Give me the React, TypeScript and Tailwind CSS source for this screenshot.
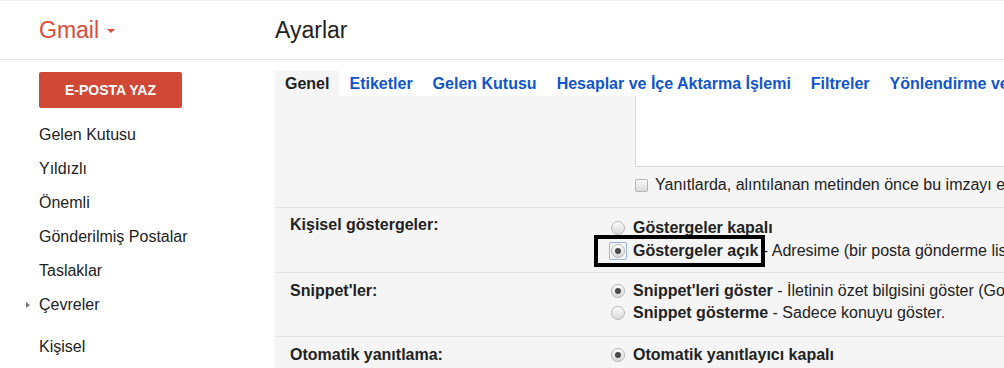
import React from "react";

const SideItems = ["Gelen Kutusu", "Yıldızlı", "Önemli", "Gönderilmiş Postalar", "Taslaklar"];

const Tabs = [
  "Genel",
  "Etiketler",
  "Gelen Kutusu",
  "Hesaplar ve İçe Aktarma İşlemi",
  "Filtreler",
  "Yönlendirme ve POP/IMAP",
];

const Radio = ({ checked = false, focus = false }: { checked?: boolean; focus?: boolean }) => (
  <span
    className={
      focus
        ? "flex h-[18px] w-[18px] -mx-[2px] shrink-0 items-center justify-center rounded-[2px] border border-[#9bb5e3]"
        : "flex h-[14px] w-[14px] shrink-0 items-center justify-center"
    }
  >
    <span className="flex h-[14px] w-[14px] items-center justify-center rounded-full border border-[#b9b9b9] bg-linear-to-b from-[#fdfdfd] to-[#d9d9d9]">
      {checked && <span className="h-[6px] w-[6px] rounded-full bg-[#4a4a4a]" />}
    </span>
  </span>
);

const App = () => {
  return (
    <div className="h-[368px] w-[1004px] overflow-hidden bg-white font-['Liberation_Sans',Arial,sans-serif] text-[16px] text-[#222]">
      {/* header */}
      <header className="flex h-[60px] items-center border-t border-b border-t-[#f0f0f0] border-b-[#e5e5e5]">
        <div className="flex w-[275px] items-center pl-[39px]">
          <span className="text-[23px] text-[#dd4b39]">Gmail</span>
          <span className="ml-[8px] mt-[2px] h-0 w-0 border-x-[4px] border-t-[4px] border-x-transparent border-t-[#dd4b39]" />
        </div>
        <h1 className="text-[23px] text-[#222]">Ayarlar</h1>
      </header>

      <div className="flex">
        {/* sidebar */}
        <aside className="w-[275px] shrink-0 pt-[12px]">
          <button className="ml-[39px] flex h-[36px] w-[143px] items-center justify-center rounded-[2px] bg-[#d14836] text-[14px] font-bold text-white">
            E-POSTA YAZ
          </button>
          <nav className="mt-[10px]">
            {SideItems.map((item) => (
              <div key={item} className="flex h-[34px] items-center pl-[39px]">
                {item}
              </div>
            ))}
            <div className="relative flex h-[34px] items-center pl-[39px]">
              <span className="absolute left-[26px] top-[14px] h-0 w-0 border-y-[3px] border-l-[4px] border-y-transparent border-l-[#777]" />
              Çevreler
            </div>
            <div className="mt-[8px] flex h-[34px] items-center pl-[39px]">Kişisel</div>
          </nav>
        </aside>

        {/* settings */}
        <main className="min-w-0 flex-1 pt-[11px]">
          <div className="flex h-[25px] whitespace-nowrap font-bold leading-[25px]">
            {Tabs.map((tab, i) => (
              <span
                key={tab}
                className={i === 0 ? "bg-[#f5f5f5] px-[10px] text-[#222]" : "px-[10px] text-[#15c]"}
              >
                {tab}
              </span>
            ))}
          </div>

          <div className="h-[300px] bg-[#f5f5f5]">
            {/* signature tail */}
            <div className="pb-[11px] pl-[360px]">
              <div className="h-[71px] w-[400px] border-x border-b border-[#d9d9d9] bg-white" />
              <div className="mt-[7px] flex h-[22px] items-center gap-[7px] whitespace-nowrap">
                <span className="h-[13px] w-[13px] shrink-0 rounded-[2px] border border-[#b5b5b5] bg-linear-to-b from-[#fafafa] to-[#dadada]" />
                <span>Yanıtlarda, alıntılanan metinden önce bu imzayı ekle ve bunu izleyen "--" satırını kaldır.</span>
              </div>
            </div>

            {/* kişisel göstergeler */}
            <div className="flex border-t border-[#e5e5e5] pt-[8px] pb-[10px]">
              <div className="w-[336px] shrink-0 pl-[15px] font-bold leading-[18px]">Kişisel göstergeler:</div>
              <div className="whitespace-nowrap leading-[23px]">
                <div className="flex h-[23px] items-center gap-[8px]">
                  <Radio />
                  <span className="font-bold">Göstergeler kapalı</span>
                </div>
                <div className="relative flex h-[23px] items-center gap-[8px]">
                  <span className="absolute -left-[17px] -top-[4px] z-10 h-[32px] w-[171px] border-[4px] border-black" />
                  <Radio checked focus />
                  <span>
                    <b>Göstergeler açık</b> - Adresime (bir posta gönderme listesine değil) gönderilen iletilerin yanında bir ok ( › ) göster
                  </span>
                </div>
              </div>
            </div>

            {/* snippet */}
            <div className="flex border-t border-[#e5e5e5] pt-[7px] pb-[12px]">
              <div className="w-[336px] shrink-0 pl-[15px] font-bold leading-[22px]">Snippet'ler:</div>
              <div className="whitespace-nowrap leading-[22px]">
                <div className="flex h-[22px] items-center gap-[8px]">
                  <Radio checked />
                  <span>
                    <b>Snippet'leri göster</b> - İletinin özet bilgisini göster (Google web aramasında olduğu gibi!).
                  </span>
                </div>
                <div className="flex h-[22px] items-center gap-[8px]">
                  <Radio />
                  <span>
                    <b>Snippet gösterme</b> - Sadece konuyu göster.
                  </span>
                </div>
              </div>
            </div>

            {/* otomatik yanıtlama */}
            <div className="flex border-t border-[#e5e5e5] pt-[7px]">
              <div className="w-[336px] shrink-0 pl-[15px] font-bold leading-[22px]">Otomatik yanıtlama:</div>
              <div className="whitespace-nowrap leading-[22px]">
                <div className="flex h-[22px] items-center gap-[8px]">
                  <Radio checked />
                  <span className="font-bold">Otomatik yanıtlayıcı kapalı</span>
                </div>
              </div>
            </div>
          </div>
        </main>
      </div>
    </div>
  );
};

export default App;
